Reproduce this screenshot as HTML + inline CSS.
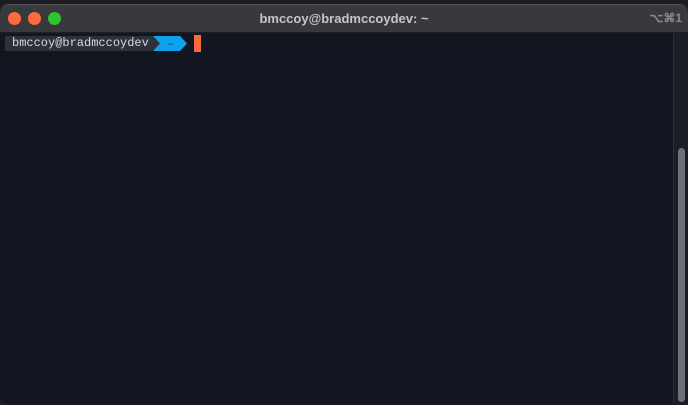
<!DOCTYPE html>
<html><head><style>
body{margin:0;width:688px;height:405px;background:#1a1c22;overflow:hidden;position:relative;font-family:"Liberation Sans",sans-serif}
.win{position:absolute;left:0;top:4px;width:688px;height:399px;background:#121620;border-radius:9px;overflow:hidden;border-top:1px solid #55565a}
.tb{position:absolute;left:0;top:0;width:688px;height:27px;background:#38393c;border-bottom:1px solid #1e1f22}
.dot{position:absolute;top:7px;width:13px;height:13px;border-radius:50%}
.title{position:absolute;left:0;width:688px;top:6px;text-align:center;color:#c6c6c8;font-weight:bold;font-size:13px}
.sc{position:absolute;right:6px;top:6px;color:#8a8b8e;font-size:12px;font-weight:bold}
.seg{position:absolute;left:5px;top:31px;height:15px;width:147px;background:#2e3139;color:#d8d8d8;font-family:"Liberation Mono",monospace;font-size:12px;line-height:15px;padding-left:7px;box-sizing:border-box}
.track{position:absolute;right:0;top:28px;width:14px;height:371px;background:#1b1e26;border-left:1px solid #2a2d35}
.thumb{position:absolute;right:3px;top:115px;width:7px;height:254px;background:#6e7078;border-radius:4px}
</style></head><body>
<div class="win">
<div class="tb">
<div class="dot" style="left:8px;background:#fe6a3c"></div>
<div class="dot" style="left:28px;background:#fe6a3c"></div>
<div class="dot" style="left:48px;background:#2fc52f"></div>
<div class="title">bmccoy@bradmccoydev: ~</div>
<div class="sc">⌥⌘1</div>
</div>
<div class="seg">bmccoy@bradmccoydev</div>
<svg style="position:absolute;left:150px;top:31px" width="40" height="15"><polygon points="0,0 3,0 10,7.5 3,15 0,15" fill="#2e3139"/><polygon points="3,0 30,0 37,7.5 30,15 3,15 10,7.5" fill="#0ea1ef"/><text x="18" y="11" font-size="9" fill="#0d2a44" font-family="Liberation Mono">~</text></svg>
<div style="position:absolute;left:194px;top:30px;width:7px;height:17px;background:#f36c3a"></div>
<div class="track"><div class="thumb"></div></div>
</div>
</body></html>
